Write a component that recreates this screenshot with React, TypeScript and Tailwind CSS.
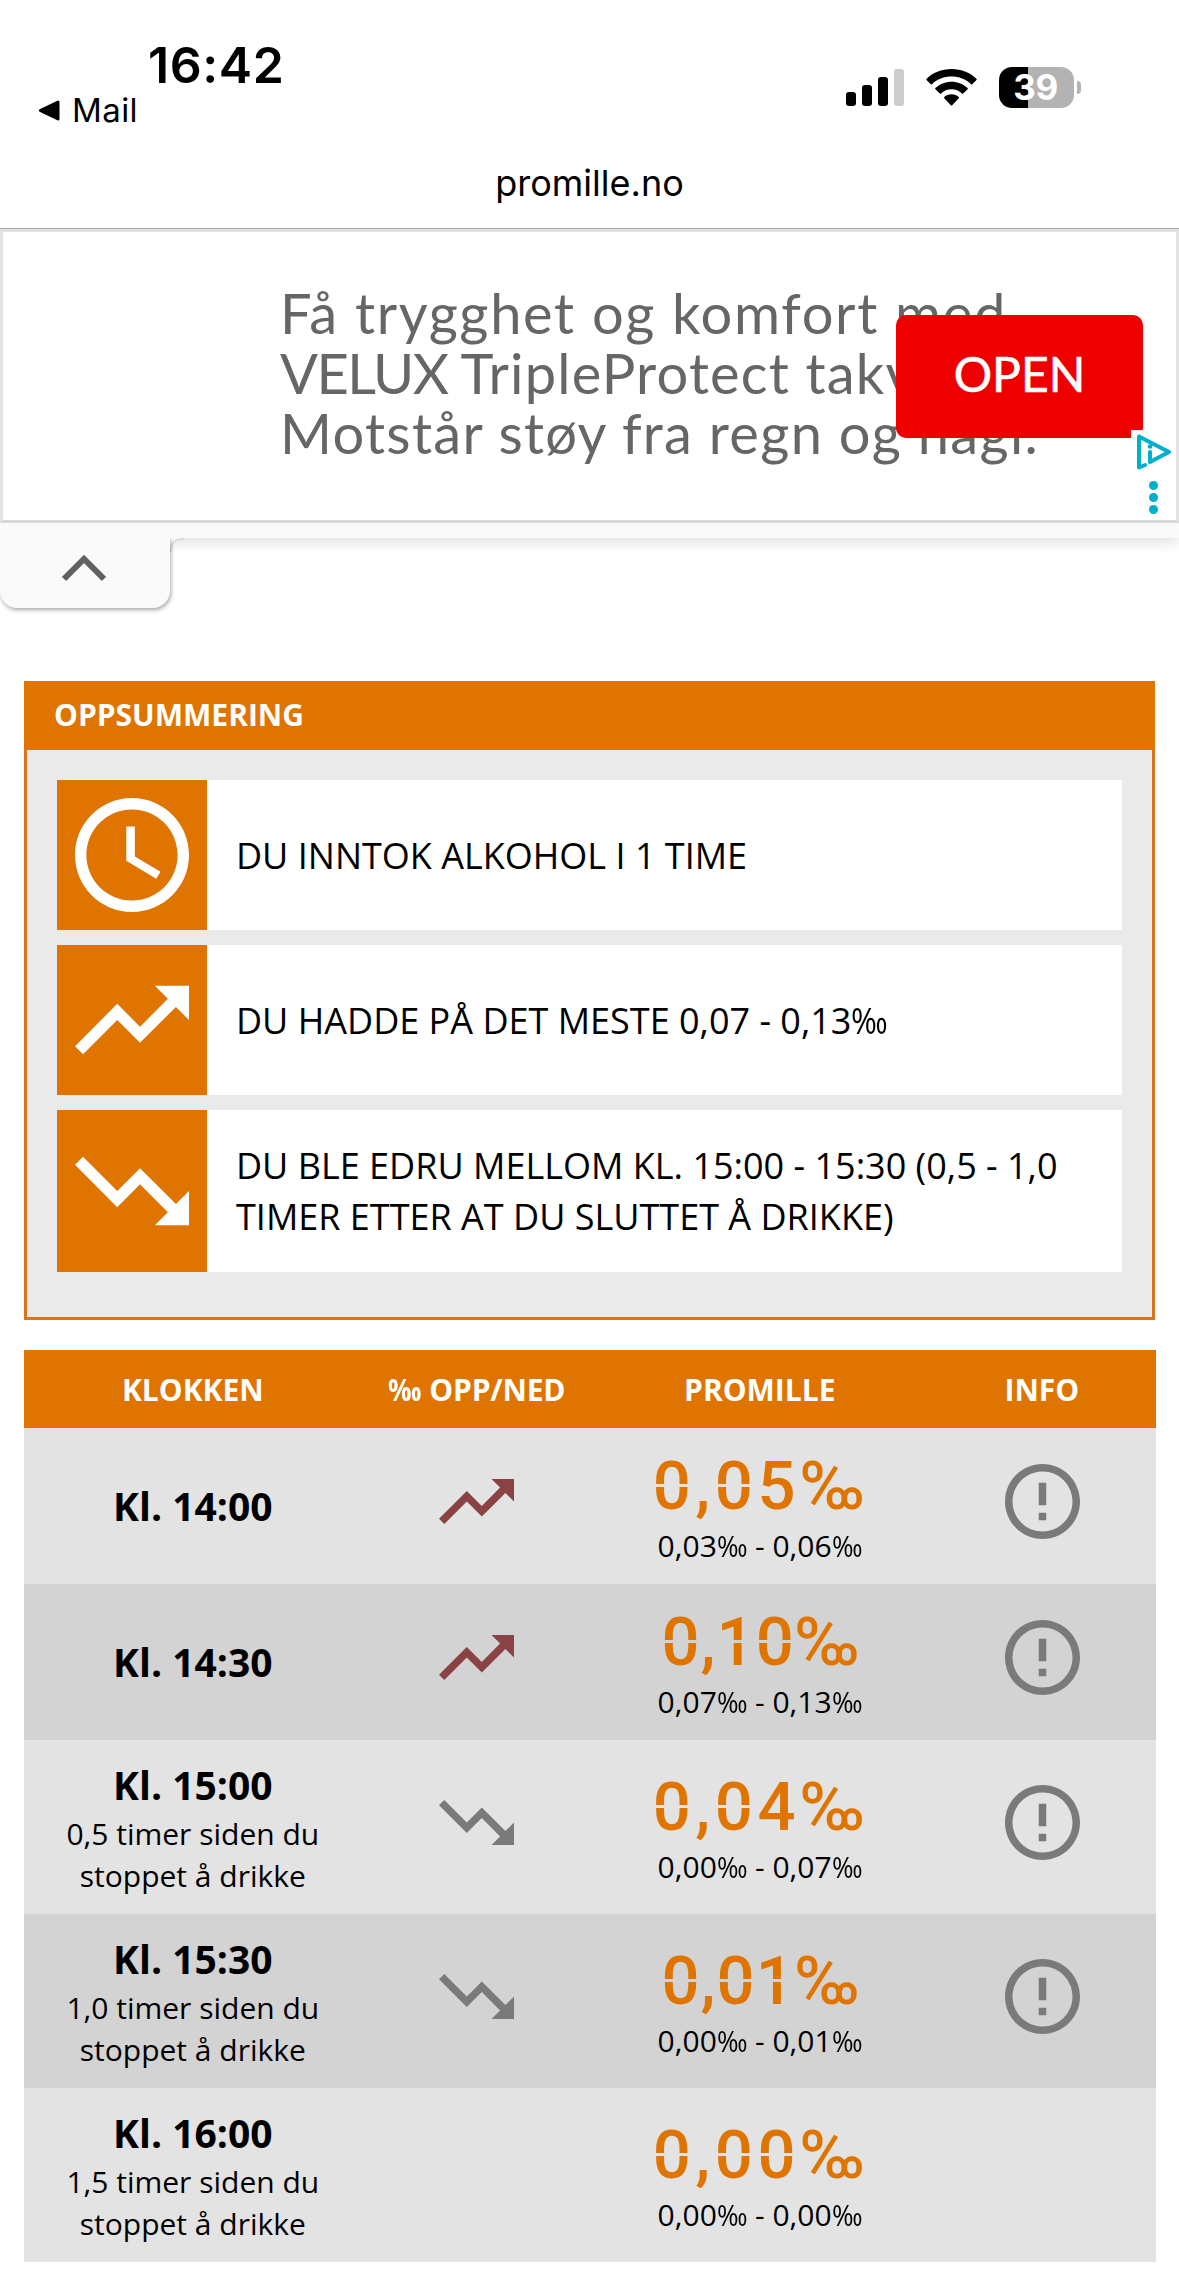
import React from "react";

type Trend = "up" | "down" | null;

type Row = {
  time: string;
  note?: [string, string];
  trend: Trend;
  value: string;
  range: [string, string];
  info: boolean;
};

const rows: Row[] = [
  { time: "Kl. 14:00", trend: "up", value: "0,05", range: ["0,03", "0,06"], info: true },
  { time: "Kl. 14:30", trend: "up", value: "0,10", range: ["0,07", "0,13"], info: true },
  { time: "Kl. 15:00", note: ["0,5 timer siden du", "stoppet å drikke"], trend: "down", value: "0,04", range: ["0,00", "0,07"], info: true },
  { time: "Kl. 15:30", note: ["1,0 timer siden du", "stoppet å drikke"], trend: "down", value: "0,01", range: ["0,00", "0,01"], info: true },
  { time: "Kl. 16:00", note: ["1,5 timer siden du", "stoppet å drikke"], trend: null, value: "0,00", range: ["0,00", "0,00"], info: false },
];

const TREND_UP = "M16 6l2.29 2.29-4.88 4.88-4-4L2 16.59 3.41 18l6-6 4 4 6.3-6.29L22 12V6z";
const TREND_DOWN = "M16 18l2.29-2.29-4.88-4.88-4 4L2 7.41 3.41 6l6 6 4-4 6.3 6.29L22 12v6z";
const CLOCK =
  "M11.99 2C6.47 2 2 6.48 2 12s4.47 10 9.99 10C17.52 22 22 17.52 22 12S17.52 2 11.99 2zM12 20c-4.42 0-8-3.58-8-8s3.58-8 8-8 8 3.58 8 8-3.58 8-8 8zm.5-13H11v6l5.25 3.15.75-1.23-4.5-2.67z";
const ALERT =
  "M11 15h2v2h-2zm0-8h2v6h-2zm.99-5C6.47 2 2 6.48 2 12s4.47 10 9.99 10C17.52 22 22 17.52 22 12S17.52 2 11.99 2zM12 20c-4.42 0-8-3.58-8-8s3.58-8 8-8 8 3.58 8 8-3.58 8-8 8z";

function Icon({ d, className }: { d: string; className: string }) {
  return (
    <svg viewBox="2 2 20 20" fill="currentColor" className={className} aria-hidden="true">
      <path d={d} />
    </svg>
  );
}

/* Per-mille sign, slightly condensed */
function Permille() {
  return <span className="-mr-[0.16em] inline-block origin-left scale-x-[0.87]">‰</span>;
}

function StatusBar() {
  return (
    <header className="flex h-[228px] flex-col font-['Inter',sans-serif] text-black">
      <div className="flex h-[150px] items-start justify-between pr-[98px] pl-[38px]">
        <div className="flex flex-col pt-[35px]">
          <div className="pl-[110px] text-[50px] leading-[60px] font-semibold tracking-[0.6px]">16:42</div>
          <div className="flex h-[30px] items-center gap-[12px] text-[33px] leading-[30px] tracking-[0.4px]">
            <svg viewBox="0 0 21 20" className="h-[21px] w-[22px]">
              <path d="M2 8.600 18.500.600Q20.500 0 20.500 2V18Q20.500 20 18.500 19.400L2 11.400Q-.5 10 2 8.600Z" />
            </svg>
            <span>Mail</span>
          </div>
        </div>
        <div className="flex items-center pt-[67px]">
          <div className="flex h-[37px] items-end gap-[6px]">
            <span className="h-[14px] w-[10px] rounded-[3px] bg-black" />
            <span className="h-[21px] w-[10px] rounded-[3px] bg-black" />
            <span className="h-[29px] w-[10px] rounded-[3px] bg-black" />
            <span className="h-[37px] w-[10px] rounded-[3px] bg-[#cccccc]" />
          </div>
          <svg viewBox="0 0 51 37" className="ml-[22px] h-[37px] w-[51px]">
            <path d="M25.500 0C35.500 0 44.500 3.800 50.600 9.900Q51 10.500 50.500 11L46.200 15.300Q45.600 15.700 45 15.200C39.800 10.200 33 7.600 25.500 7.600S11.200 10.200 6 15.200Q5.400 15.700 4.800 15.300L.5 11Q0 10.500.4 9.900C6.500 3.800 15.500 0 25.500 0Z" />
            <path d="M25.500 12.700C31.700 12.700 37.300 15.100 41.600 19Q42.100 19.600 41.600 20.200L37.200 24.500Q36.600 24.900 36 24.400C33.200 21.900 29.600 20.300 25.500 20.300S17.800 21.900 15 24.400Q14.400 24.900 13.800 24.500L9.400 20.200Q8.900 19.600 9.400 19C13.700 15.100 19.300 12.700 25.500 12.700Z" />
            <path d="M25.500 25.300C28.300 25.300 30.800 26.300 32.700 28Q33.300 28.600 32.700 29.200L26.200 36.200Q25.500 36.900 24.800 36.200L18.300 29.200Q17.700 28.600 18.300 28C20.200 26.300 22.700 25.300 25.500 25.300Z" />
          </svg>
          <div className="ml-[22px] flex h-[41px] w-[75px] items-center justify-center rounded-[13px] bg-[linear-gradient(90deg,#000_29px,#b3b3b3_29px)] pr-[2px] text-[35px] leading-none font-bold tracking-[-0.5px] text-white">
            39
          </div>
          <span className="ml-[3px] h-[13px] w-[4px] rounded-r-full bg-[#b3b3b3]" />
        </div>
      </div>
      <div className="pt-[10px] text-center text-[36px] leading-[46px]">promille.no</div>
    </header>
  );
}

function AdBanner() {
  return (
    <section className="relative h-[294px] border-[3px] border-[#e3e3e3] border-b-[#d8d8d8] bg-white">
      <p className="pt-[51px] pl-[277px] font-['Lato',sans-serif] text-[56px] leading-[60px] whitespace-nowrap text-[#666666]">
        <span className="block tracking-[1.68px]">Få trygghet og komfort med</span>
        <span className="block tracking-[1.2px]">
          <span className="tracking-[-1.5px]">VELUX </span>TripleProtect takvindu.
        </span>
        <span className="block tracking-[1.3px]">Motstår støy fra regn og hagl.</span>
      </p>
      <button className="absolute top-[83px] left-[893px] h-[123px] w-[247px] rounded-[10px] bg-[#ef0000] pb-[6px] font-['Lato',sans-serif] text-[48px] leading-none text-white [-webkit-text-stroke:0.6px_#fff]">
        OPEN
      </button>
      <div className="absolute top-[198px] right-0 flex h-[89px] w-[45px] flex-col items-center bg-white pt-[4px] text-[#00aecd]">
        <svg viewBox="0 0 36 36" className="h-[36px] w-[36px]" fill="none" stroke="currentColor" strokeWidth="4" strokeLinecap="round" strokeLinejoin="round">
          <path d="M9 31 3 33.500V2.500L33 18 14 28V18" />
          <circle cx="14" cy="12.500" r="2.300" fill="currentColor" stroke="none" />
        </svg>
        <div className="flex flex-col gap-[3px] pt-[11px]">
          <span className="h-[9px] w-[9px] rounded-full bg-[#00aecd]" />
          <span className="h-[9px] w-[9px] rounded-full bg-[#00aecd]" />
          <span className="h-[9px] w-[9px] rounded-full bg-[#00aecd]" />
        </div>
      </div>
    </section>
  );
}

function CollapseTab() {
  return (
    <div className="h-[158px]">
      <div className="h-[15px] bg-[#fafafa] shadow-[0_4px_14px_rgba(0,0,0,0.14)]" />
      <div className="relative flex">
        <div className="flex h-[70px] w-[170px] justify-center rounded-b-[17px] bg-[#fafafa] pt-[16px] pr-[2px] shadow-[1px_2px_4px_rgba(0,0,0,0.35)] [clip-path:inset(0_-12px_-12px_0)]">
          <svg viewBox="0 0 44 28" className="h-[28px] w-[44px]" fill="none" stroke="#616161" strokeWidth="6">
            <path d="M2 25 22 5 42 25" />
          </svg>
        </div>
        <svg viewBox="0 0 14 14" className="h-[14px] w-[14px]">
          <path d="M0 0H14Q0 0 0 14Z" fill="#fafafa" />
          <path d="M14 .5Q.5 .5.5 14" fill="none" stroke="#cfcfcf" />
        </svg>
      </div>
    </div>
  );
}

function SummaryItem({ d, children }: { d: string; children: React.ReactNode }) {
  return (
    <div className="flex min-h-[150px] bg-white">
      <div className="flex w-[150px] shrink-0 items-center justify-center bg-[#df7500]">
        <Icon d={d} className="h-[114px] w-[114px] text-white" />
      </div>
      <div className="flex items-center py-[30px] pl-[29px] text-[36px] leading-[51px] text-black">
        <p>{children}</p>
      </div>
    </div>
  );
}

function Summary() {
  return (
    <section className="mx-[24px] h-[639px] w-[1131px] border-[3px] border-[#d9751a] bg-[#eaeaea]">
      <h2 className="-mx-[3px] -mt-[3px] h-[69px] bg-[#df7500] pl-[30px] text-[30px] leading-[68px] font-bold text-white">
        OPPSUMMERING
      </h2>
      <div className="flex flex-col gap-[15px] px-[30px] pt-[30px]">
        <SummaryItem d={CLOCK}>DU INNTOK ALKOHOL I 1 TIME</SummaryItem>
        <SummaryItem d={TREND_UP}>
          DU HADDE PÅ DET MESTE 0,07 - 0,13
          <Permille />
        </SummaryItem>
        <SummaryItem d={TREND_DOWN}>
          DU BLE EDRU MELLOM KL. 15:00 - 15:30 (0,5 - 1,0
          <br />
          TIMER ETTER AT DU SLUTTET Å DRIKKE)
        </SummaryItem>
      </div>
    </section>
  );
}

const COLUMNS = "grid grid-cols-[30fr_20fr_30fr_20fr] text-center";

/* Digits with a thin break at mid-height, like the segments of an LED display */
const SPLIT =
  "[mask-image:linear-gradient(#000_31.500px,transparent_31.500px,transparent_34px,#000_34px)]";

function Reading({ value }: { value: string }) {
  const tracking = value.includes("1") ? "tracking-[1px]" : "tracking-[4.5px]";
  return (
    <div className={`flex h-[66px] justify-center pl-[2px] font-['Roboto',sans-serif] text-[67px] leading-[66px] font-medium whitespace-nowrap text-[#df7500] ${tracking}`}>
      {value.split("").map((c, i) => (
        <span key={i} className={c === "0" || c === "1" ? SPLIT : ""}>
          {c}
        </span>
      ))}
      <span>‰</span>
    </div>
  );
}

function TableRow({ row, dark }: { row: Row; dark: boolean }) {
  return (
    <div className={`${COLUMNS} items-center text-black ${row.note ? "h-[174px]" : "h-[156px]"} ${dark ? "bg-[#d3d3d3]" : "bg-[#e3e3e3]"}`}>
      <div className="pr-[2px]">
        <div className="text-[39px] leading-[54px] font-bold">{row.time}</div>
        {row.note && (
          <div className="-mb-px pt-px text-[30px] leading-[42px]">
            {row.note[0]}
            <br />
            {row.note[1]}
          </div>
        )}
      </div>
      <div className="flex justify-center pb-[9px]">
        {row.trend === "up" && <Icon d={TREND_UP} className="h-[75px] w-[75px] text-[#8a4245]" />}
        {row.trend === "down" && <Icon d={TREND_DOWN} className="h-[75px] w-[75px] text-[#7a7a7a]" />}
      </div>
      <div className="pt-[8px]">
        <Reading value={row.value} />
        <div className="pt-[6px] text-[30px] leading-[42px]">
          {row.range[0]}
          <Permille /> - {row.range[1]}
          <Permille />
        </div>
      </div>
      <div className="flex justify-center pb-[9px]">
        {row.info && <Icon d={ALERT} className="h-[75px] w-[75px] text-[#7a7a7a]" />}
      </div>
    </div>
  );
}

export default function App() {
  return (
    <div className="h-[2276px] w-[1179px] overflow-hidden bg-white font-['Open_Sans',sans-serif]">
      <StatusBar />
      <div className="h-px bg-[#a8a8a8]" />
      <AdBanner />
      <CollapseTab />
      <Summary />
      <section className="mx-[24px] mt-[30px] w-[1132px]">
        <div className={`${COLUMNS} h-[78px] bg-[#df7500] text-[30px] leading-[79px] font-bold text-white`}>
          <div className="pr-[2px]">KLOKKEN</div>
          <div className="tracking-[-0.2px]">
            <Permille /> OPP/NED
          </div>
          <div>PROMILLE</div>
          <div className="pr-[2px]">INFO</div>
        </div>
        {rows.map((row, i) => (
          <TableRow key={row.time} row={row} dark={i % 2 === 1} />
        ))}
      </section>
    </div>
  );
}
